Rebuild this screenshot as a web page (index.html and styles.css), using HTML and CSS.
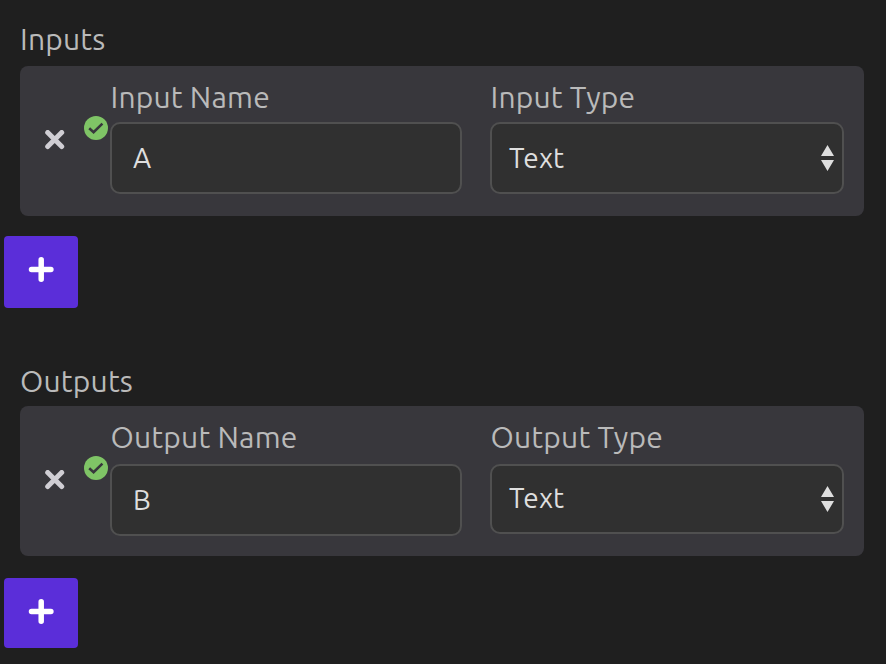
FILE: index.html
```html
<!DOCTYPE html>
<html lang="en">
<head>
<meta charset="utf-8">
<title>Inputs and Outputs</title>
<link rel="stylesheet" href="styles.css">
</head>
<body>
<section class="group">
  <h2 class="title">Inputs</h2>
  <div class="card">
    <button class="remove" aria-label="Remove"><svg width="22" height="20" viewBox="0 0 22 20"><path d="M3.7 2.5L17.7 16.5M17.7 2.5L3.7 16.5"/></svg></button>
    <svg class="valid" width="24" height="24" viewBox="0 0 24 24"><circle cx="12" cy="12" r="12"/><path d="M5.2 12.2L9.6 16.2L18.4 7.6"/></svg>
    <div class="field name">
      <label class="label" for="in-name">Input Name</label>
      <input class="control" id="in-name" value="A">
    </div>
    <div class="field type">
      <div class="label">Input Type</div>
      <div class="control select"><span>Text</span><svg width="14" height="26" viewBox="0 0 14 26"><path d="M7.5 0L14 11H1ZM1 15H14L7.5 26Z"/></svg></div>
    </div>
  </div>
  <button class="add" aria-label="Add input"><svg width="26" height="26" viewBox="0 0 26 26"><path d="M13.2 2.8V22.2M3.5 12.5H22.9"/></svg></button>
</section>
<section class="group outputs">
  <h2 class="title">Outputs</h2>
  <div class="card">
    <button class="remove" aria-label="Remove"><svg width="22" height="20" viewBox="0 0 22 20"><path d="M3.7 2.5L17.7 16.5M17.7 2.5L3.7 16.5"/></svg></button>
    <svg class="valid" width="24" height="24" viewBox="0 0 24 24"><circle cx="12" cy="12" r="12"/><path d="M5.2 12.2L9.6 16.2L18.4 7.6"/></svg>
    <div class="field name">
      <label class="label" for="out-name">Output Name</label>
      <input class="control" id="out-name" value="B">
    </div>
    <div class="field type">
      <div class="label">Output Type</div>
      <div class="control select"><span>Text</span><svg width="14" height="26" viewBox="0 0 14 26"><path d="M7.5 0L14 11H1ZM1 15H14L7.5 26Z"/></svg></div>
    </div>
  </div>
  <button class="add" aria-label="Add output"><svg width="26" height="26" viewBox="0 0 26 26"><path d="M13.2 2.8V22.2M3.5 12.5H22.9"/></svg></button>
</section>
</body>
</html>
```
FILE: styles.css
```css
* { box-sizing: border-box; }
body {
  margin: 0;
  height: 664px;
  overflow: hidden;
  background: #1f1f1f;
  color: #bababa;
  font-family: Ubuntu, "Noto Sans", sans-serif;
  font-size: 30px;
  letter-spacing: 0.2px;
}
button { border: 0; padding: 0; background: none; }
svg { display: block; }
.group { padding: 19px 22px 0 20px; height: 342px; }
.outputs { height: 322px; }
.title {
  margin: 0 0 7px;
  height: 40px;
  font-size: 30px;
  font-weight: 400;
  line-height: 40px;
}
.outputs .title { margin-bottom: 5px; }
.card {
  display: flex;
  height: 150px;
  padding: 11px 20px 0 24px;
  border-radius: 8px;
  background: #38373c;
}
.remove { width: 22px; height: 20px; margin-top: 53px; }
.remove path { stroke: #d0ced4; stroke-width: 5; stroke-linecap: round; }
.valid { margin: 39px 2px 0 18px; }
.valid circle { fill: #7fc466; }
.valid path { fill: none; stroke: #38373c; stroke-width: 2.6; }
.name { width: 352px; margin-right: 28px; }
.type { width: 354px; }
.label {
  display: block;
  height: 40px;
  margin-bottom: 5px;
  padding-left: 0.5px;
  line-height: 40px;
  white-space: nowrap;
}
.outputs .label { margin-bottom: 7px; }
.control {
  display: block;
  width: 100%;
  height: 72px;
  padding: 0 21px 2px;
  border: 2px solid #505050;
  border-radius: 10px;
  outline: 0;
  background: #303030;
  color: #dedede;
  font: 28px/66px Ubuntu, "Noto Sans", sans-serif;
  letter-spacing: 0.1px;
}
.select {
  display: flex;
  justify-content: space-between;
  align-items: center;
  padding: 0 8px 0 17px;
  line-height: 68px;
}
.outputs .select { height: 70px; line-height: 66px; }
.outputs .select span { margin-top: -2px; }
.select path { fill: #dedede; }
.add {
  display: flex;
  align-items: center;
  justify-content: center;
  width: 74px;
  height: 72px;
  margin: 20px 0 0 -16px;
  padding-bottom: 4px;
  border-radius: 4px;
  background: #5b2ed9;
}
.outputs .add { height: 70px; margin-top: 22px; padding-bottom: 2px; }
.add path { stroke: #fff; stroke-width: 5.5; stroke-linecap: round; }
```
